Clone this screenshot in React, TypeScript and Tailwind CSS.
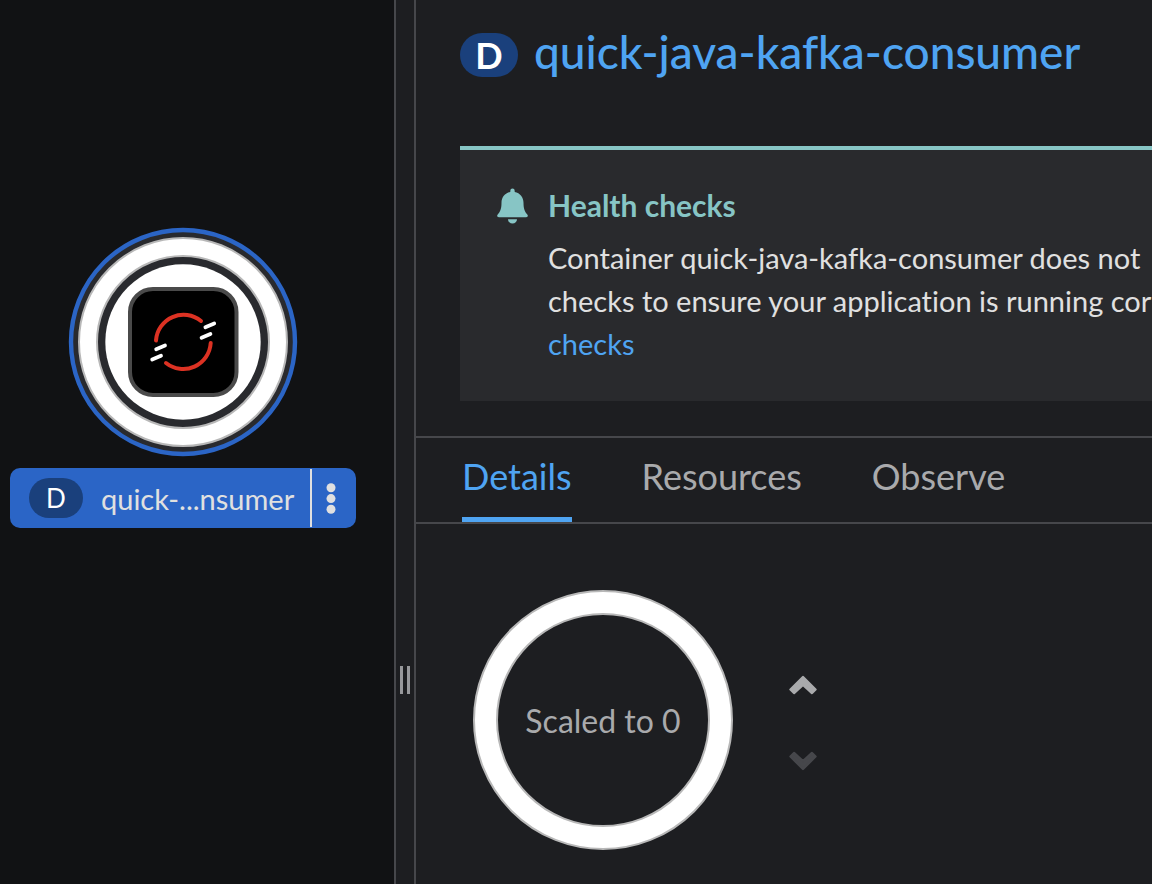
import React from "react";

const tabs = ["Details", "Resources", "Observe"];

function WorkloadNode() {
  return (
    <svg viewBox="0 0 230 230" className="block h-[230px] w-[230px]" role="img" aria-label="OpenShift workload">
      <circle cx="115" cy="115" r="112" fill="#292a2e" stroke="#2b65c6" strokeWidth="4.4" />
      <circle cx="115" cy="115" r="95" fill="none" stroke="#b8b8b8" strokeWidth="20" />
      <circle cx="115" cy="115" r="95" fill="none" stroke="#ffffff" strokeWidth="16" />
      <circle cx="115" cy="115" r="77.7" fill="#ffffff" />
      <rect x="62" y="62" width="106.500" height="106" rx="23" fill="#000000" stroke="#4a4a4a" strokeWidth="4" />
      <g fill="none" strokeWidth="4" strokeLinecap="round">
        <path d="M88 113.500A27.600 27.600 0 0 1 133 94" stroke="#dc3223" />
        <path d="M142.700 116A27.600 27.600 0 0 1 98 136" stroke="#dc3223" />
        <path
          d="M137.400 100.300l8.800-3.800M133.600 110.700l8.800-3.800M88.200 122.200l8.800-3.800M84.200 132.600l8.800-3.800"
          stroke="#ffffff"
          strokeWidth="3.8"
        />
      </g>
    </svg>
  );
}

function Chevron({ down = false }: { down?: boolean }) {
  return (
    <svg viewBox="0 0 28 20" className="h-5 w-7" aria-hidden="true">
      <path
        d={
          down
            ? "M14 18L1.500 5.500L5 2L14 10.200L23 2L26.500 5.500Z"
            : "M14 2L26.500 14.500L23 18L14 9.800L5 18L1.500 14.500Z"
        }
        fill="currentColor"
        stroke="currentColor"
        strokeWidth="2.4"
        strokeLinejoin="round"
      />
    </svg>
  );
}

export default function App() {
  return (
    <div className="flex min-h-screen overflow-hidden bg-[#1d1e21] font-['Lato',sans-serif] text-[29px] leading-[43px] text-[#e0e0e0] [font-variant-ligatures:none]">
      <section className="w-[394px] shrink-0 bg-[#111214] pt-[227px] pl-[10px]" aria-label="Topology">
        <div className="flex w-[346px] flex-col items-center gap-[11px]">
          <WorkloadNode />
          <div className="flex h-[60px] w-full items-center rounded-[10px] bg-[#2b65c6]">
            <span className="ml-[19px] flex h-10 w-[54px] shrink-0 items-center justify-center rounded-full bg-[#1a407c] text-[26px] text-white">
              D
            </span>
            <span className="flex-1 pl-[18px] whitespace-nowrap">quick-...nsumer</span>
            <button
              type="button"
              aria-label="Actions"
              className="flex h-[58px] w-[46px] items-center justify-center border-l-2 border-[#e0e0e0] pr-[6px]"
            >
              <svg viewBox="0 0 10 32" className="h-8 w-[10px]" fill="currentColor" aria-hidden="true">
                <circle cx="5" cy="5.8" r="4.5" />
                <circle cx="5" cy="16.6" r="4.5" />
                <circle cx="5" cy="27.200" r="4.5" />
              </svg>
            </button>
          </div>
        </div>
      </section>

      <div
        role="separator"
        aria-orientation="vertical"
        className="flex w-[22px] shrink-0 justify-center gap-1 border-x-2 border-[#46474b] pt-[666px]"
      >
        <span className="h-7 w-[3px] bg-[#97989b]" />
        <span className="h-7 w-[3px] bg-[#97989b]" />
      </div>

      <main className="min-w-0 flex-1 overflow-hidden">
        <header className="flex items-center gap-4 pt-[22px] pl-11">
          <span className="mt-[6px] flex h-11 w-[58px] shrink-0 items-center justify-center rounded-full bg-[#1a407c] text-[36px] font-bold text-white">
            D
          </span>
          <h1 className="text-[46px] leading-[60px] font-medium whitespace-nowrap">
            <a href="#deployment" className="text-[#4fa4f2]">
              quick-java-kafka-consumer
            </a>
          </h1>
        </header>

        <section className="mt-16 ml-11 flex h-[255px] border-t-4 border-[#87c5c5] bg-[#292a2d] pt-[37px] pl-9">
          <svg viewBox="0 0 32 36" className="mt-px h-9 w-8 shrink-0" fill="#87c5c5" aria-hidden="true">
            <path d="M16.500 0.600a2.200 2.200 0 0 1 2.200 2.200v1.100C24.100 4.900 27.500 9.200 27.500 14.800c0 6.400 1.400 9.100 3.800 11.700 1.100 1.300.5 2.700-1.200 2.700H2.900c-1.700 0-2.300-1.400-1.200-2.700C4.100 23.900 5.500 21.200 5.500 14.800 5.500 9.200 8.900 4.900 14.300 3.900V2.800A2.200 2.200 0 0 1 16.500 0.600z" />
            <path d="M12 31.200h9c0 2.500-2 4.300-4.500 4.300s-4.500-1.800-4.500-4.300z" />
          </svg>
          <div className="ml-5 whitespace-nowrap">
            <h2 className="text-[30px] leading-[36px] font-bold text-[#87c5c5]">Health checks</h2>
            <p className="mt-[13px]">
              Container quick-java-kafka-consumer does not
              <br />
              checks to ensure your application is running corr
              <br />
              <a href="#health-checks" className="text-[#4fa4f2]">
                checks
              </a>
            </p>
          </div>
        </section>

        <nav className="mt-[35px] flex h-[88px] gap-[70px] border-y-2 border-[#46474b] pl-[46px] text-[36px]">
          {tabs.map((tab, index) => (
            <button
              key={tab}
              type="button"
              aria-current={index === 0 ? "page" : undefined}
              className={
                index === 0
                  ? "border-b-[5px] border-[#4fa4f2] pb-[3px] text-[#4fa4f2]"
                  : "border-b-[5px] border-transparent pb-[3px] text-[#a9aaac]"
              }
            >
              {tab}
            </button>
          ))}
        </nav>

        <section className="flex items-center gap-14 pt-[66px] pb-[34px] pl-[57px]">
          <div className="grid h-[260px] w-[260px] place-items-center rounded-full border-2 border-[#b8b8b8] bg-white">
            <div className="grid h-[214px] w-[214px] place-items-center rounded-full border-2 border-[#b8b8b8] bg-[#1d1e21] text-[32px] text-[#a9aaac]">
              Scaled to 0
            </div>
          </div>
          <div className="flex flex-col gap-14 pt-[5px]">
            <button type="button" aria-label="Increase the Pod count" className="text-[#a9aaac]">
              <Chevron />
            </button>
            <button type="button" aria-label="Decrease the Pod count" disabled className="text-[#46474b]">
              <Chevron down />
            </button>
          </div>
        </section>
      </main>
    </div>
  );
}
